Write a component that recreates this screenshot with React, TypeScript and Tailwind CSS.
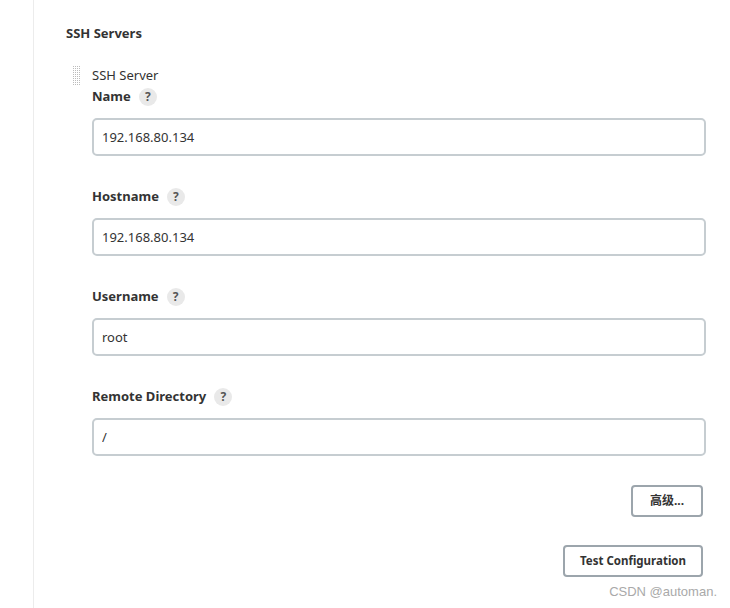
const fields = [
  { label: "Name", value: "192.168.80.134" },
  { label: "Hostname", value: "192.168.80.134" },
  { label: "Username", value: "root" },
  { label: "Remote Directory", value: "/" },
];

function HelpIcon() {
  return (
    <span className="ml-[8px] inline-flex h-[18px] w-[18px] items-center justify-center rounded-full bg-[#e9e9e9] text-[12px] font-bold text-[#555]">
      ?
    </span>
  );
}

function DragHandle() {
  const dots = [];
  for (let r = 0; r < 10; r++) {
    for (let c = 0; c < 4; c++) {
      dots.push(<rect key={`${r}-${c}`} x={c * 2} y={r * 2} width={1} height={1} fill="#bcbcbc" />);
    }
  }
  return (
    <svg width="8" height="20" viewBox="0 0 8 20" className="ml-[7px] mt-[-1px]">
      {dots}
    </svg>
  );
}

function Field({ label, value, first }: { label: string; value: string; first?: boolean }) {
  return (
    <div className={first ? "mt-[4px]" : "mt-[32px]"}>
      <div className="flex h-[18px] items-center text-[13px] font-bold text-[#333]">
        {label}
        <HelpIcon />
      </div>
      <input
        readOnly
        value={value}
        className="mt-[12px] block h-[38px] w-[614px] rounded-[5px] border-2 border-[#c6cdd1] bg-white pl-[8px] text-[13px] text-[#333] outline-none"
      />
    </div>
  );
}

export default function App() {
  return (
    <div
      className="relative flex h-[608px] w-[730px] overflow-hidden bg-white text-[#333]"
      style={{ fontFamily: '"Noto Sans", "Noto Sans CJK SC", sans-serif' }}
    >
      <div className="w-[34px] shrink-0 border-r border-[#ececec]" />
      <div className="flex-1 pl-[32px] pt-[24px]">
        <div className="h-[18px] text-[13px] font-bold leading-[18px]">SSH Servers</div>
        <div className="mt-[24px] flex">
          <div className="w-[26px] shrink-0 pt-[1px]">
            <DragHandle />
          </div>
          <div>
            <div className="h-[18px] text-[13px] leading-[18px] text-[#333]">SSH Server</div>
            {fields.map((f, i) => (
              <Field key={f.label} label={f.label} value={f.value} first={i === 0} />
            ))}
            <div className="mt-[29px] flex w-[614px] flex-col items-end pr-[3px]">
              <button className="h-[32px] w-[72px] rounded-[4px] border-2 border-[#9ca5ac] bg-white text-[12px] font-bold text-[#333]">
                高级...
              </button>
              <button className="mt-[28px] h-[32px] w-[140px] rounded-[4px] border-2 border-[#9ca5ac] bg-white text-[11.5px] font-bold text-[#333]">
                Test Configuration
              </button>
            </div>
          </div>
        </div>
      </div>
      <div
        className="absolute right-[13px] top-[584px] text-[13px] leading-[16px] text-[#a9a9a9]"
        style={{ fontFamily: '"Liberation Sans", Arial, sans-serif' }}
      >
        CSDN @automan.
      </div>
    </div>
  );
}
